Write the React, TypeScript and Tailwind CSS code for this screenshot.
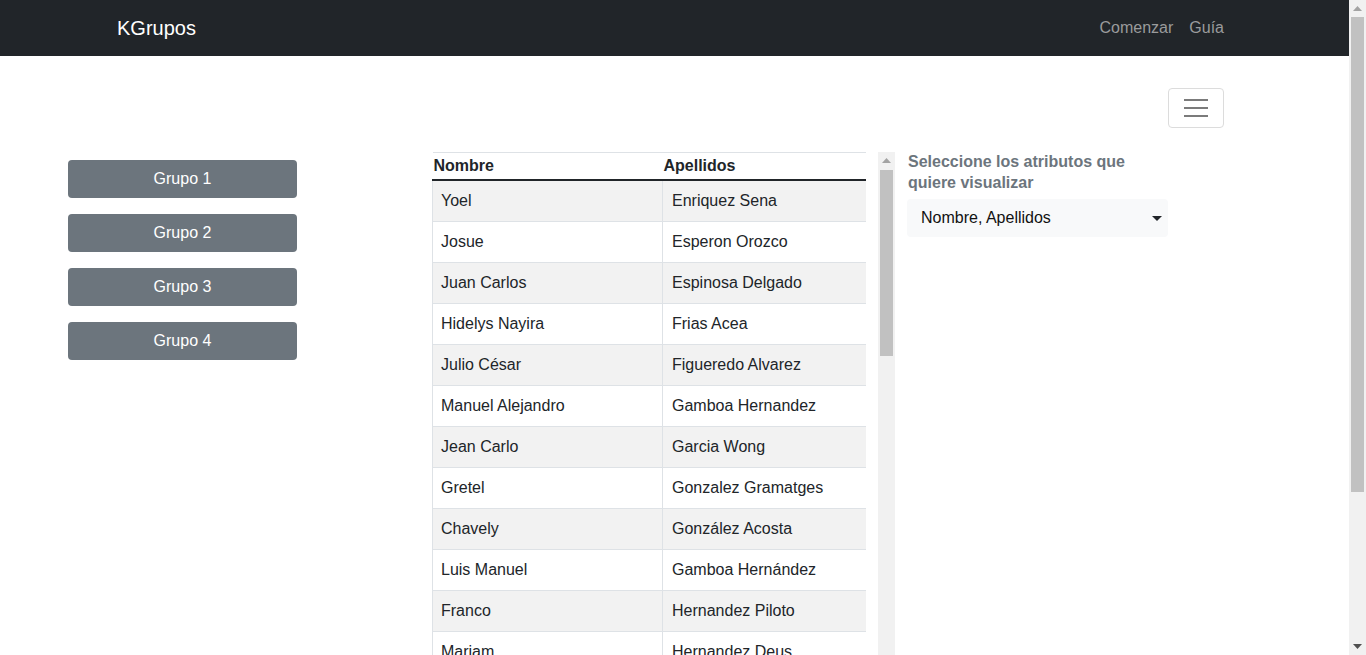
import React from "react";

const rows: [string, string][] = [
  ["Yoel", "Enriquez Sena"],
  ["Josue", "Esperon Orozco"],
  ["Juan Carlos", "Espinosa Delgado"],
  ["Hidelys Nayira", "Frias Acea"],
  ["Julio César", "Figueredo Alvarez"],
  ["Manuel Alejandro", "Gamboa Hernandez"],
  ["Jean Carlo", "Garcia Wong"],
  ["Gretel", "Gonzalez Gramatges"],
  ["Chavely", "González Acosta"],
  ["Luis Manuel", "Gamboa Hernández"],
  ["Franco", "Hernandez Piloto"],
  ["Mariam", "Hernandez Deus"],
  ["Ana Laura", "Leyva Pérez"],
  ["Carlos", "Lopez Ramos"],
];

function UpArrow({ color }: { color: string }) {
  return (
    <svg width="9" height="5" viewBox="0 0 9 5">
      <path d="M0 5 L4.5 0 L9 5 Z" fill={color} />
    </svg>
  );
}
function DownArrow({ color }: { color: string }) {
  return (
    <svg width="9" height="5" viewBox="0 0 9 5">
      <path d="M0 0 L4.5 5 L9 0 Z" fill={color} />
    </svg>
  );
}

export default function App() {
  return (
    <div className="h-[655px] w-[1366px] overflow-hidden flex bg-white text-[#212529] font-['Liberation_Sans',Arial,sans-serif]">
      <div className="flex-1 min-w-0 flex flex-col">
        <nav className="h-[56px] shrink-0 bg-[#212529] flex items-center pl-[117px] pr-[117px]">
          <span className="text-[20px] text-white leading-[30px]">KGrupos</span>
          <div className="ml-auto flex text-[16px] text-[#9a9b9c]">
            <span className="px-2">Comenzar</span>
            <span className="pl-2 pr-[8px]">Guía</span>
          </div>
        </nav>
        <div className="flex justify-end pr-[125px] pt-[32px]">
          <div className="w-[56px] h-[40px] border border-[#dcdcdc] rounded-[4px] flex flex-col items-center justify-center gap-[6px]">
            <div className="w-[24px] h-[2px] bg-[#7b7b7b]" />
            <div className="w-[24px] h-[2px] bg-[#7b7b7b]" />
            <div className="w-[24px] h-[2px] bg-[#7b7b7b]" />
          </div>
        </div>
        <div className="flex mt-[24px] flex-1 min-h-0">
          <div className="w-[432px] shrink-0 pl-[68px] pt-[8px] flex flex-col gap-[16px]">
            {["Grupo 1", "Grupo 2", "Grupo 3", "Grupo 4"].map((g) => (
              <div
                key={g}
                className="w-[229px] h-[38px] rounded-[4px] bg-[#6c757d] text-white text-[16px] flex items-center justify-center"
              >
                {g}
              </div>
            ))}
          </div>
          <div className="w-[434px] shrink-0 overflow-hidden">
            <table className="w-[434px] border-collapse text-[16px] leading-[24px] table-fixed">
              <colgroup>
                <col className="w-[230px]" />
                <col className="w-[204px]" />
              </colgroup>
              <thead>
                <tr>
                  <th className="text-left font-bold px-[1px] py-[1px] border-t border-t-[#dee2e6] border-b-2 border-b-[#212529]">
                    Nombre
                  </th>
                  <th className="text-left font-bold px-[1px] py-[1px] border-t border-t-[#dee2e6] border-b-2 border-b-[#212529]">
                    Apellidos
                  </th>
                </tr>
              </thead>
              <tbody>
                {rows.map(([n, a], i) => (
                  <tr key={i} className={i % 2 === 0 ? "bg-[#f2f2f2]" : "bg-white"}>
                    <td className="border border-[#dee2e6] px-[8px] py-[8px]">{n}</td>
                    <td className="border border-[#dee2e6] px-[9px] py-[8px]">{a}</td>
                  </tr>
                ))}
              </tbody>
            </table>
          </div>
          <div className="ml-[12px] w-[17px] shrink-0 bg-[#f1f1f1] flex flex-col items-center">
            <div className="h-[17px] flex items-center justify-center">
              <UpArrow color="#a3a3a3" />
            </div>
            <div className="w-[13px] h-[186px] mt-[1px] bg-[#c1c1c1]" />
          </div>
          <div className="pl-[12px]">
            <div className="w-[261px] pl-[1px] -mt-[1px] text-[16px] font-bold leading-[21px] text-[#6c757d]">
              Seleccione los atributos que quiere visualizar
            </div>
            <div className="mt-[6px] w-[261px] h-[38px] rounded-[4px] bg-[#f8f9fa] flex items-center pl-[14px] pr-[6px] text-[16px] text-[#111]">
              <span>Nombre, Apellidos</span>
              <svg className="ml-auto" width="10" height="5" viewBox="0 0 10 5">
                <path d="M0 0 L5 5 L10 0 Z" fill="#212529" />
              </svg>
            </div>
          </div>
        </div>
      </div>
      <div className="w-[17px] shrink-0 bg-[#f1f1f1] flex flex-col items-center">
        <div className="h-[17px] flex items-center justify-center">
          <UpArrow color="#a3a3a3" />
        </div>
        <div className="w-[13px] h-[475px] bg-[#c1c1c1]" />
        <div className="mt-auto h-[17px] flex items-center justify-center">
          <DownArrow color="#505050" />
        </div>
      </div>
    </div>
  );
}
